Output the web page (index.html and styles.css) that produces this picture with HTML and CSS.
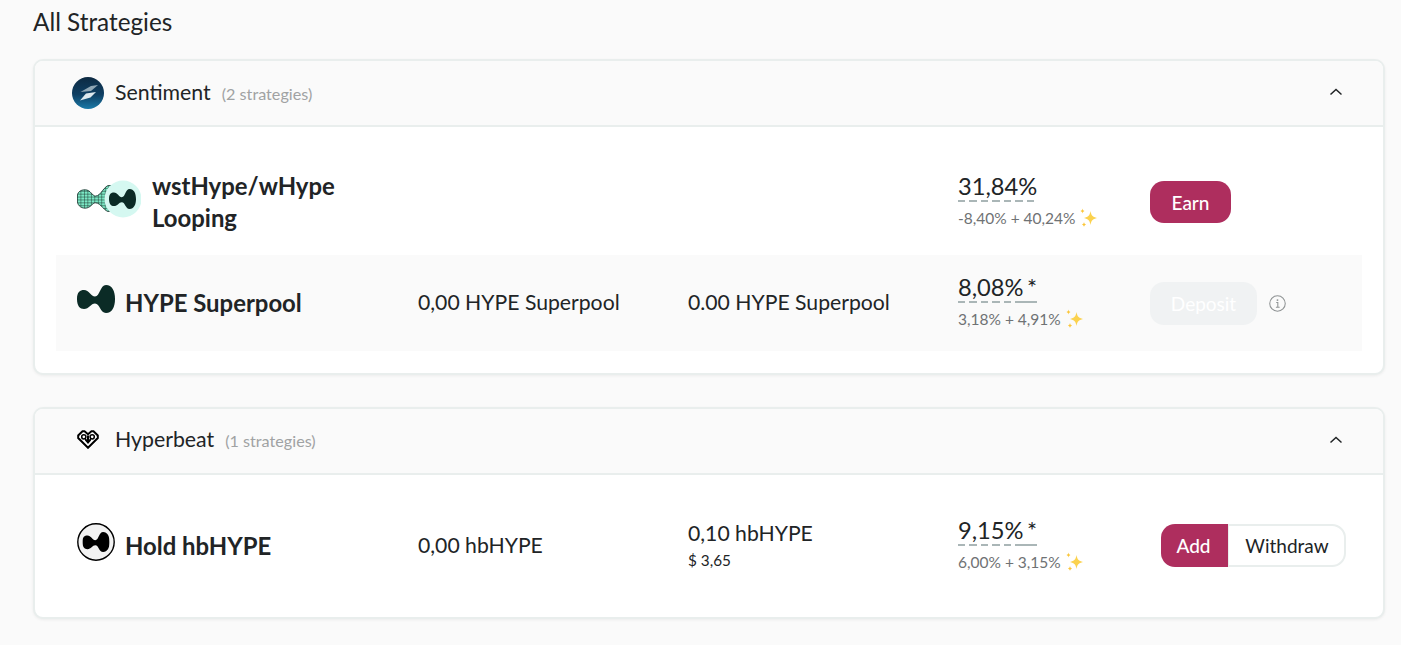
FILE: index.html
```html
<!DOCTYPE html>
<html lang="en">
<head>
<meta charset="utf-8">
<title>All Strategies</title>
<link rel="stylesheet" href="styles.css">
</head>
<body>
<svg class="defs" width="0" height="0" aria-hidden="true">
  <defs>
    <symbol id="bow" viewBox="0 0 38 28"><path d="M0 14C0 7 3 5 7 5C12 5 14 11.500 18 11.500C23 11.500 23 0 29 0C35 0 38 6 38 14C38 22 35 28 29 28C23 28 23 18.500 18 18.500C14 18.500 12 24 7 24C3 24 0 21 0 14Z"/></symbol>
    <symbol id="spark" viewBox="0 0 20 20">
      <path fill="#fbd24e" d="M11.500 3C12.300 7.500 13.500 9 18 10C13.500 11 12.300 12.500 11.500 17C10.700 12.500 9.500 11 5 10C9.500 9 10.700 7.500 11.500 3Z"/>
      <path fill="#fbc63a" d="M3.500 0.500C3.800 2 4.200 2.500 5.500 3C4.200 3.500 3.800 4 3.500 5.500C3.200 4 2.800 3.500 1.500 3C2.800 2.500 3.200 2 3.500 0.500Z"/>
      <path fill="#fbc63a" d="M5 14C5.300 15.500 5.800 16 7 16.500C5.800 17 5.300 17.500 5 19C4.700 17.500 4.200 17 3 16.500C4.200 16 4.700 15.500 5 14Z"/>
    </symbol>
  </defs>
</svg>
<main class="page">
  <h1 class="title">All Strategies</h1>

  <section class="card">
    <header class="card-head card-head-a">
      <svg class="proto-logo" viewBox="0 0 32 32" aria-hidden="true">
        <defs><linearGradient id="sg" x1="0" y1="0" x2="0" y2="1"><stop offset="0" stop-color="#0d2a42"/><stop offset=".55" stop-color="#0f3f63"/><stop offset="1" stop-color="#1a7aa8"/></linearGradient></defs>
        <circle cx="16" cy="16" r="16" fill="url(#sg)"/>
        <path fill="#8fa6b4" d="M8.500 15L19 9L26 8L19 14Z"/>
        <path fill="#dfe9ee" d="M14 16.500L24 15L18.500 20.500L8 23.500Z"/>
      </svg>
      <span class="proto-name">Sentiment</span>
      <span class="proto-count">(2 strategies)</span>
      <svg class="chevron" viewBox="0 0 14 8" aria-hidden="true"><path d="M1.500 6.500L7 1.500L12.500 6.500"/></svg>
    </header>
    <div class="card-body body-a">
      <div class="row row-tall">
        <div class="name-cell">
          <svg class="pair-logo" viewBox="0 0 64 38" aria-hidden="true">
            <defs>
              <pattern id="mesh" width="3" height="3" patternUnits="userSpaceOnUse"><rect width="3" height="3" fill="#7be8c5"/><path d="M0 0H3M0 0V3" stroke="#17302a" stroke-width=".8"/></pattern>
            </defs>
            <svg x="0" y="5" width="44" height="27" viewBox="0 0 38 28" preserveAspectRatio="none"><path fill="url(#mesh)" stroke="#17302a" stroke-width=".8" d="M0 14C0 7 3 5 7 5C12 5 13 11.500 16 11.500C21 11.500 23 0 29 0C35 0 38 6 38 14C38 22 35 28 29 28C23 28 21 18.500 16 18.500C13 18.500 12 24 7 24C3 24 0 21 0 14Z"/></svg>
            <circle cx="46" cy="19" r="18.500" fill="#d5f8f1"/>
            <svg x="32" y="9" width="27" height="20" viewBox="0 0 38 28"><use href="#bow" width="38" height="28" fill="#0b2b26"/></svg>
          </svg>
          <span class="name name-wrap">wstHype/wHype Looping</span>
        </div>
        <div class="val"></div>
        <div class="val"></div>
        <div class="apy-cell">
          <div class="apy"><span class="dash dash-full">31,84%</span></div>
          <div class="apy-sub">-8,40% + 40,24% <svg class="spark"><use href="#spark"/></svg></div>
        </div>
        <div class="action"><button class="btn btn-primary btn-earn" type="button">Earn</button></div>
      </div>
      <div class="row row-alt">
        <div class="name-cell">
          <svg class="logo" aria-hidden="true"><use href="#bow" fill="#0b2b26"/></svg>
          <span class="name">HYPE Superpool</span>
        </div>
        <div class="val">0,00 HYPE Superpool</div>
        <div class="val">0.00 HYPE Superpool</div>
        <div class="apy-cell">
          <div class="apy"><span class="dash">8,08%</span><span class="solid">*</span></div>
          <div class="apy-sub">3,18% + 4,91% <svg class="spark"><use href="#spark"/></svg></div>
        </div>
        <div class="action">
          <button class="btn btn-disabled" type="button">Deposit</button>
          <svg class="info" viewBox="0 0 16 16" aria-hidden="true"><circle cx="8" cy="8" r="7.300"/><path d="M6.800 7H8.300V11.500M6.500 11.500H10"/><circle class="dot" cx="8" cy="4.800" r=".9"/></svg>
        </div>
      </div>
    </div>
  </section>

  <section class="card">
    <header class="card-head">
      <svg class="beat-logo" viewBox="0 0 22 20" aria-hidden="true">
        <path class="beat-line" d="M11 18.800L1.200 9V6.500L5.500 2.200H7.500L11 5.200L14.500 2.200H16.500L20.800 6.500V9Z"/>
        <circle class="beat-ring" cx="6.800" cy="7.800" r="2.100"/>
        <circle class="beat-ring" cx="15.200" cy="7.800" r="2.100"/>
        <path class="beat-fill" d="M10 6.500H12V10.500L14 9.500V11.500L11 15L8 11.500V9.500L10 10.500Z"/>
      </svg>
      <span class="proto-name">Hyperbeat</span>
      <span class="proto-count">(1 strategies)</span>
      <svg class="chevron" viewBox="0 0 14 8" aria-hidden="true"><path d="M1.500 6.500L7 1.500L12.500 6.500"/></svg>
    </header>
    <div class="card-body">
      <div class="row row-hold">
        <div class="name-cell">
          <svg class="logo logo-round" viewBox="0 0 38 38" aria-hidden="true">
            <circle cx="19" cy="19" r="18.200" fill="#f2f2f2" stroke="#000" stroke-width="1.400"/>
            <svg x="5" y="9" width="28" height="20" viewBox="0 0 38 28"><use href="#bow" width="38" height="28" fill="#000"/></svg>
          </svg>
          <span class="name">Hold hbHYPE</span>
        </div>
        <div class="val">0,00 hbHYPE</div>
        <div class="val val-stack">0,10 hbHYPE<div class="val-sub">$ 3,65</div></div>
        <div class="apy-cell">
          <div class="apy"><span class="dash">9,15%</span><span class="solid">*</span></div>
          <div class="apy-sub">6,00% + 3,15% <svg class="spark"><use href="#spark"/></svg></div>
        </div>
        <div class="action action-group">
          <button class="btn btn-primary btn-left" type="button">Add</button>
          <button class="btn btn-right" type="button">Withdraw</button>
        </div>
      </div>
    </div>
  </section>
</main>
</body>
</html>
```
FILE: styles.css
```css
* { box-sizing: border-box; }
html, body { margin: 0; height: 100%; }
body {
  background: #fafafa;
  color: #212426;
  font-family: Lato, "Noto Sans", sans-serif;
  overflow: hidden;
}
.defs { position: absolute; }
.page { padding: 6px 16px 0 33px; }
.title {
  margin: 0 0 22px;
  font-size: 24.300px;
  font-weight: 400;
  line-height: 31px;
}
.card {
  margin: 0 0 32px;
  background: #fff;
  border: 2px solid #e9eeed;
  border-radius: 10px;
  box-shadow: 0 1px 3px rgba(0, 0, 0, .06);
  overflow: hidden;
}
.card-head {
  display: flex;
  align-items: center;
  height: 66px;
  padding: 0 40px 4px 37px;
  background: #fafafa;
  border-bottom: 2px solid #e9eeed;
}
.card-head-a { padding-bottom: 2px; }
.proto-logo { width: 32px; height: 32px; margin: 2px 11px 0 0; }
.beat-logo { width: 22px; height: 20px; margin: 0 16px 0 5px; }
.beat-line { fill: #fff; stroke: #000; stroke-width: 2; stroke-linejoin: miter; }
.beat-ring { fill: #fff; stroke: #000; stroke-width: 1.500; }
.beat-fill { fill: #000; }
.proto-name { font-size: 21.300px; line-height: 28px; }
.proto-count { margin: 3px 0 0 11px; font-size: 16.200px; color: #a0a2a3; }
.chevron {
  width: 14px;
  height: 8px;
  margin: 2px 0 0 auto;
  fill: none;
  stroke: #212426;
  stroke-width: 1.500;
}
.card-head-a .chevron { margin-top: 0; }
.card-body { padding: 0 21px; }
.body-a { padding-bottom: 22px; }
.row {
  display: grid;
  grid-template-columns: 341px 270px 270px 192px 1fr;
  align-items: center;
  padding-left: 21px;
}
.row-tall { height: 128px; padding-top: 22px; }
.row-alt { height: 96px; background: #fafafa; }
.row-hold { height: 142px; }
.name-cell { display: flex; align-items: center; }
.logo { width: 38px; height: 28px; margin: -9px 10px 0 0; flex: none; }
.logo-round { height: 38px; margin-top: -9px; }
.pair-logo { width: 64px; height: 38px; margin: -7px 11px 0 0; flex: none; }
.name { font-size: 23.900px; font-weight: 700; line-height: 32px; }
.name-wrap { width: 200px; }
.val { margin-bottom: 1px; font-size: 21.200px; line-height: 27px; }
.val-stack { margin-bottom: 3px; }
.val-sub { margin-top: 3px; font-size: 15.300px; line-height: 20px; }
.apy-cell { width: 160px; margin-bottom: 4px; }
.apy { display: flex; width: 79px; font-size: 23.700px; line-height: 29px; white-space: nowrap; }
.dash {
  width: 59px;
  padding-bottom: 1px;
  background: repeating-linear-gradient(90deg, #aab6b7 0 7.500px, transparent 7.500px 11.500px) left bottom / 100% 2px no-repeat;
}
.dash-full { width: 79px; }
.solid {
  width: 20px;
  padding-bottom: 1px;
  text-align: right;
  background: linear-gradient(#aab6b7, #aab6b7) left bottom / 100% 2px no-repeat;
}
.apy-sub { margin-top: 5px; font-size: 15.500px; line-height: 22px; color: #6f7274; white-space: nowrap; }
.spark { display: inline-block; width: 20px; height: 20px; vertical-align: -4px; margin-left: 0; }
.action { display: flex; align-items: center; }
.btn {
  height: 42px;
  padding: 0;
  border: 0;
  border-radius: 14px;
  font-family: inherit;
  font-size: 19px;
  font-weight: 400;
  line-height: 1;
}
.btn-primary { background: #ae2e5e; color: #fff; font-weight: 500; }
.btn-earn { width: 81px; }
.btn-disabled { width: 107px; height: 43px; background: #f0f2f3; color: #fff; }
.info { width: 17px; height: 17px; margin-left: 12px; fill: none; stroke: #8f9394; stroke-width: 1; }
.info .dot { fill: #8f9394; stroke: none; }
.action-group { margin: 0 0 2px 11px; }
.btn-left { width: 67px; height: 43px; padding-right: 2px; border-radius: 14px 0 0 14px; }
.btn-right {
  width: 118px;
  height: 43px;
  padding-left: 1px;
  background: #fff;
  color: #212426;
  border: 2px solid #e9eeed;
  border-left-width: 1px;
  border-radius: 0 14px 14px 0;
}
```
